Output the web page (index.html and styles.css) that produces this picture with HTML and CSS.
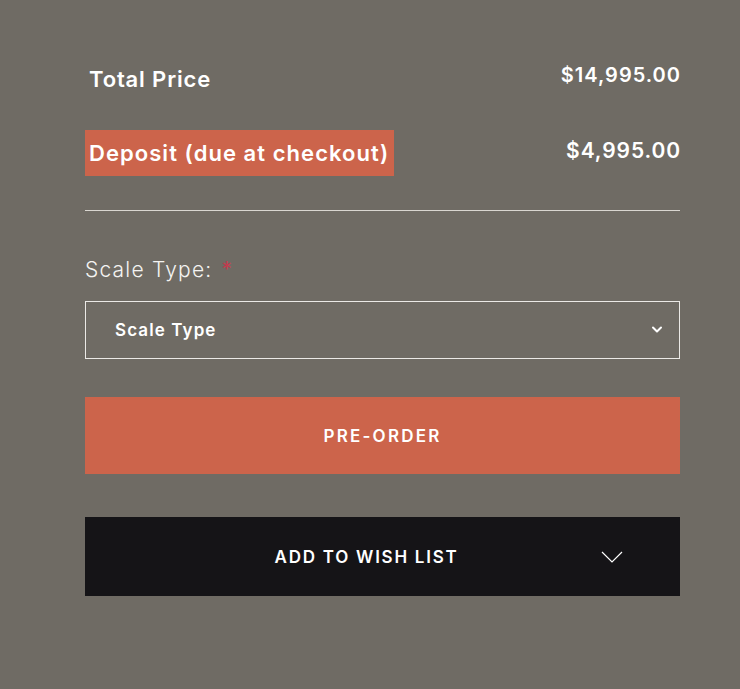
FILE: index.html
```html
<!DOCTYPE html>
<html lang="en">
<head>
<meta charset="utf-8">
<title>Product purchase</title>
<link rel="stylesheet" href="styles.css">
</head>
<body>
<div class="panel">
  <div class="row row-total">
    <span class="label">Total Price</span>
    <span class="price">$14,995.00</span>
  </div>
  <div class="row row-deposit">
    <span class="label highlight">Deposit (due at checkout)</span>
    <span class="price">$4,995.00</span>
  </div>
  <hr class="divider">
  <div class="field-label">Scale Type: <span class="req">*</span></div>
  <div class="select">
    <span class="select-text">Scale Type</span>
    <svg class="select-chev" width="12" height="8" viewBox="0 0 12 8"><path d="M2 1.5 L6 5.5 L10 1.5" fill="none" stroke="#fff" stroke-width="2" stroke-linecap="round" stroke-linejoin="round"/></svg>
  </div>
  <button class="btn btn-preorder">PRE-ORDER</button>
  <button class="btn btn-wish">
    <span class="wish-text">ADD TO WISH LIST</span>
    <svg class="wish-chev" width="22" height="12" viewBox="0 0 22 12"><path d="M1 1 L11 11 L21 1" fill="none" stroke="#fff" stroke-width="1.2"/></svg>
  </button>
</div>
</body>
</html>
```
FILE: styles.css
```css
html, body {
  margin: 0;
  padding: 0;
  background: #6f6b64;
}
body {
  font-family: "Inter", "Noto Sans", sans-serif;
  color: #fff;
}
.panel {
  width: 595px;
  margin-left: 85px;
  padding-top: 56px;
}
.row {
  display: flex;
  justify-content: space-between;
  align-items: flex-start;
  height: 46px;
}
.row-deposit {
  margin-top: 28px;
}
.label {
  font-size: 22px;
  font-weight: 600;
  letter-spacing: 0.85px;
  line-height: 46px;
  padding: 0 4px;
}
.highlight {
  background: #cc644b;
  letter-spacing: 1.05px;
  padding-right: 5px;
}
.price {
  font-size: 20px;
  font-weight: 600;
  letter-spacing: 1px;
  line-height: 38px;
  margin-right: -1px;
}
.row-deposit .price {
  font-size: 21px;
  letter-spacing: 0.9px;
  line-height: 42px;
}
.divider {
  border: 0;
  height: 1px;
  background: #d9d6d0;
  margin: 34px 0 0;
}
.field-label {
  margin-top: 39px;
  font-size: 21px;
  font-weight: 300;
  letter-spacing: 1.2px;
  line-height: 40px;
  color: #f4f3f1;
}
.req {
  color: #c23b4e;
  font-weight: 400;
  margin-left: 2px;
}
.select {
  margin-top: 11px;
  height: 58px;
  box-sizing: border-box;
  border: 1px solid #ebe9e6;
  display: flex;
  align-items: center;
  justify-content: space-between;
  padding: 0 16px 0 29px;
}
.select-text {
  font-size: 17px;
  font-weight: 600;
  letter-spacing: 1.1px;
}
.btn {
  display: flex;
  align-items: center;
  justify-content: center;
  width: 100%;
  border: 0;
  color: #fff;
  font-family: inherit;
  font-size: 17px;
  font-weight: 600;
  letter-spacing: 2.2px;
  cursor: pointer;
  position: relative;
}
.btn-preorder {
  margin-top: 38px;
  height: 77px;
  background: #cc644b;
}
.btn-wish {
  margin-top: 43px;
  height: 79px;
  background: #151417;
  padding-right: 38px;
  letter-spacing: 1.75px;
}
.wish-chev {
  position: absolute;
  right: 57px;
  top: 34px;
}
```
